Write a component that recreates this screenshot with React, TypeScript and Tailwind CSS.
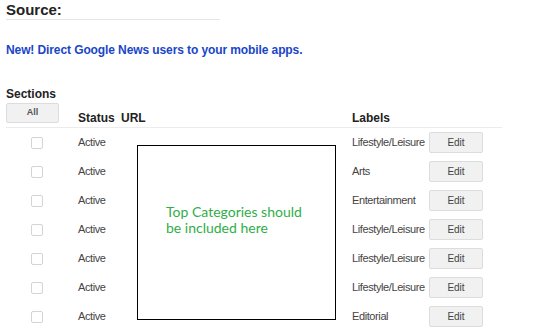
const rows = [
  'Lifestyle/Leisure',
  'Arts',
  'Entertainment',
  'Lifestyle/Leisure',
  'Lifestyle/Leisure',
  'Lifestyle/Leisure',
  'Editorial',
]

export default function App() {
  return (
    <div className="relative h-[332px] w-[554px] overflow-hidden bg-white px-[6px] text-[#222] font-['Liberation_Sans',Arial,sans-serif]">
      <div className="pt-px text-[15px] font-bold leading-[18px]">Source:</div>
      <div className="w-[214px] border-b border-[#e6e6e6]" />

      <div className="mt-[22px] text-[12px] font-bold leading-[16px] tracking-[-0.1px] text-[#1a45c8]">
        New! Direct Google News users to your mobile apps.
      </div>

      <div className="mt-[28px] text-[12px] font-bold leading-[16px]">Sections</div>

      <div className="w-[496px]">
        <div className="flex h-[26px] items-end border-b border-[#ececec]">
          <div className="w-[72px] self-start pt-[1px]">
            <button className="flex h-[20px] w-[53px] items-center justify-center rounded-[2px] border border-[#dcdcdc] bg-[#f1f1f1] text-[9px] font-bold text-[#555]">
              All
            </button>
          </div>
          <div className="w-[43px] text-[12px] font-bold">Status</div>
          <div className="w-[231px] text-[12px] font-bold">URL</div>
          <div className="text-[12px] font-bold">Labels</div>
        </div>

        {rows.map((label, i) => (
          <div key={i} className="flex h-[29px] items-center text-[11px] tracking-[-0.4px] text-[#444]">
            <div className="w-[72px] pl-[25px]">
              <div className="h-[12px] w-[12px] rounded-[2px] border border-[#d4d4d4] bg-white" />
            </div>
            <div className="w-[43px]">Active</div>
            <div className="w-[231px]" />
            <div className="w-[77px] whitespace-nowrap">{label}</div>
            <button className="flex h-[21px] w-[54px] items-center justify-center rounded-[2px] border border-[#dcdcdc] bg-[#f1f1f1] text-[10px] tracking-normal text-[#444]">
              Edit
            </button>
          </div>
        ))}
      </div>

      {/* overlay note */}
      <div className="absolute left-[137px] top-[145px] h-[175px] w-[199px] border border-black bg-white pl-[28px] pt-[58px]">
        <p className="text-[14px] leading-[16px] text-[#2fae48] font-['Lato',sans-serif]">
          Top Categories should
          <br />
          be included here
        </p>
      </div>
    </div>
  )
}
